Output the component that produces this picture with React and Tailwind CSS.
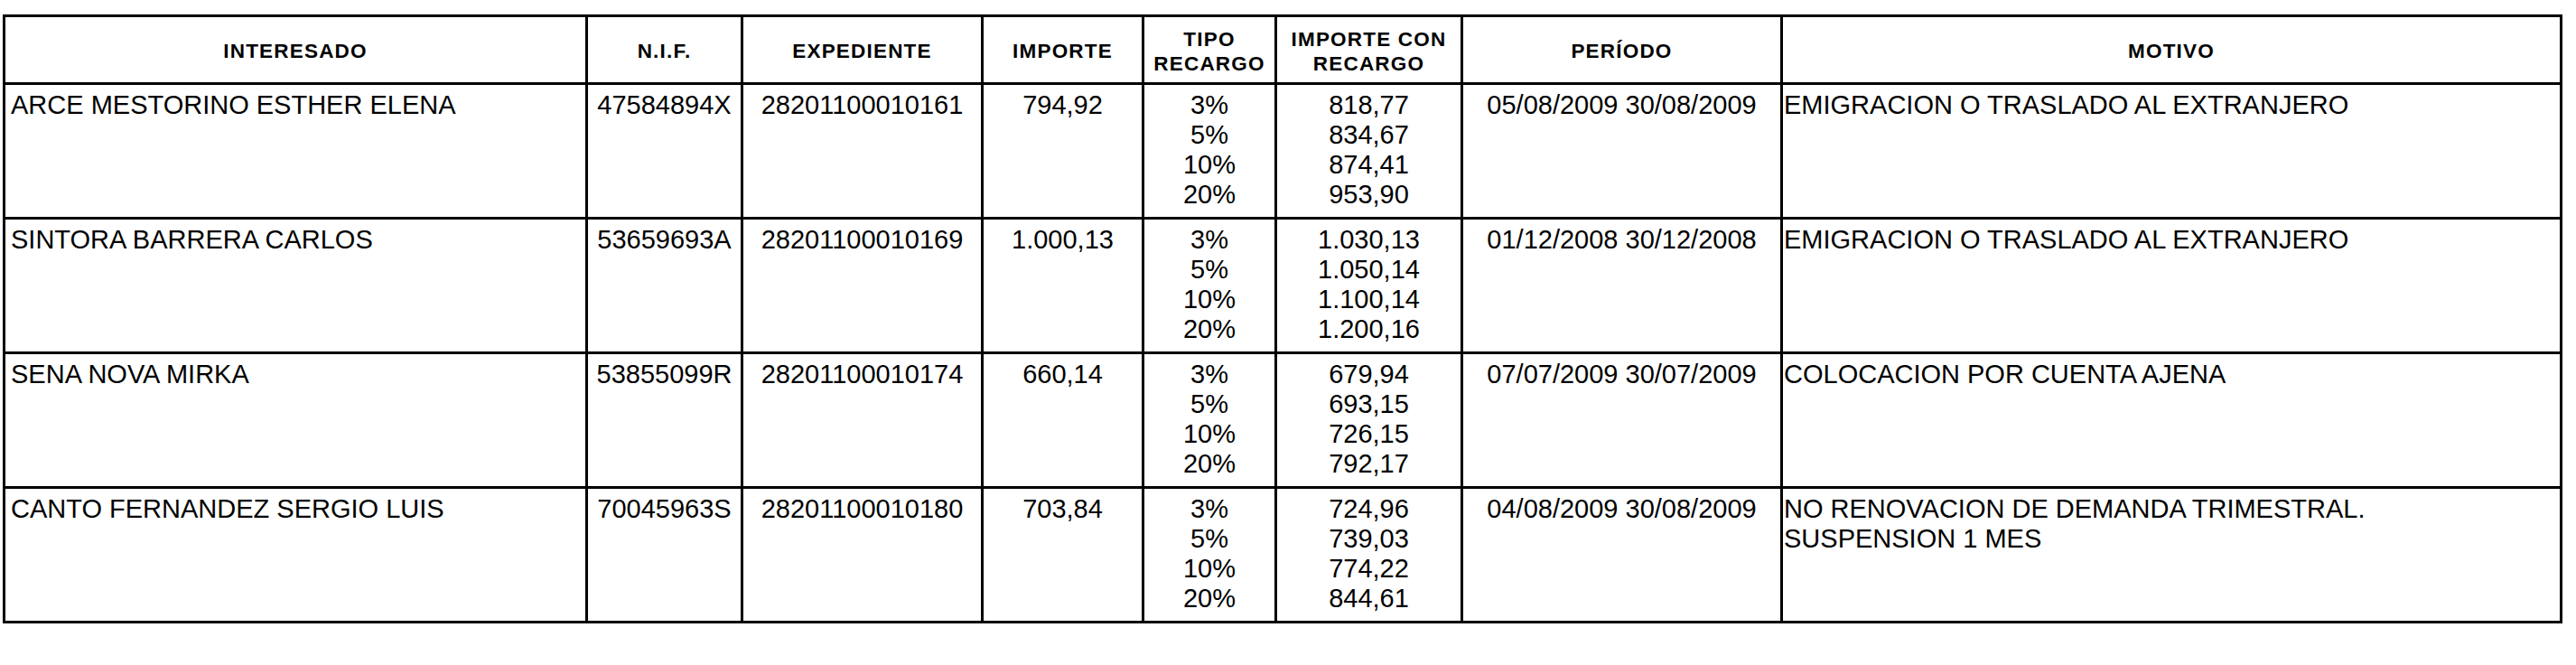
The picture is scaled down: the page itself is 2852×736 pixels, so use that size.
const headers = [
  ["INTERESADO"],
  ["N.I.F."],
  ["EXPEDIENTE"],
  ["IMPORTE"],
  ["TIPO", "RECARGO"],
  ["IMPORTE CON", "RECARGO"],
  ["PERÍODO"],
  ["MOTIVO"],
];

const tipos = ["3%", "5%", "10%", "20%"];

const rows = [
  {
    nombre: "ARCE MESTORINO ESTHER ELENA",
    nif: "47584894X",
    expediente: "28201100010161",
    importe: "794,92",
    recargos: ["818,77", "834,67", "874,41", "953,90"],
    periodo: "05/08/2009 30/08/2009",
    motivo: ["EMIGRACION O TRASLADO AL EXTRANJERO"],
  },
  {
    nombre: "SINTORA BARRERA CARLOS",
    nif: "53659693A",
    expediente: "28201100010169",
    importe: "1.000,13",
    recargos: ["1.030,13", "1.050,14", "1.100,14", "1.200,16"],
    periodo: "01/12/2008 30/12/2008",
    motivo: ["EMIGRACION O TRASLADO AL EXTRANJERO"],
  },
  {
    nombre: "SENA NOVA MIRKA",
    nif: "53855099R",
    expediente: "28201100010174",
    importe: "660,14",
    recargos: ["679,94", "693,15", "726,15", "792,17"],
    periodo: "07/07/2009 30/07/2009",
    motivo: ["COLOCACION POR CUENTA AJENA"],
  },
  {
    nombre: "CANTO FERNANDEZ SERGIO LUIS",
    nif: "70045963S",
    expediente: "28201100010180",
    importe: "703,84",
    recargos: ["724,96", "739,03", "774,22", "844,61"],
    periodo: "04/08/2009 30/08/2009",
    motivo: ["NO RENOVACION DE DEMANDA TRIMESTRAL.", "SUSPENSION 1 MES"],
  },
];

const cell = "bg-white pt-[6px] text-[29px] leading-[33px] whitespace-nowrap";

const Lines = ({ items }) => (
  <>
    {items.map((line) => (
      <div key={line}>{line}</div>
    ))}
  </>
);

const App = () => {
  return (
    <div className="min-h-screen bg-white text-black font-['Liberation_Sans',Arial,sans-serif] pt-[16px] pl-[3px]">
      <div className="grid w-[2834px] bg-black p-[3px] gap-[3px] grid-cols-[642px_169px_263px_175px_144px_203px_351px_860px] grid-rows-[72px_146px_146px_146px_146px]">
        {headers.map((h) => (
          <div
            key={h.join(" ")}
            className="bg-white flex flex-col items-center justify-center text-center font-bold text-[22.5px] tracking-[1.2px] leading-[27px] pt-[3px]"
          >
            <Lines items={h} />
          </div>
        ))}

        {rows.map((r) => (
          <div key={r.expediente} className="contents">
            <div className={`${cell} pl-[6px]`}>{r.nombre}</div>
            <div className={`${cell} text-center`}>{r.nif}</div>
            <div className={`${cell} text-center`}>{r.expediente}</div>
            <div className={`${cell} text-center`}>{r.importe}</div>
            <div className={`${cell} text-center`}>
              <Lines items={tipos} />
            </div>
            <div className={`${cell} text-center`}>
              <Lines items={r.recargos} />
            </div>
            <div className={`${cell} text-center`}>{r.periodo}</div>
            <div className={`${cell} pl-px`}>
              <Lines items={r.motivo} />
            </div>
          </div>
        ))}
      </div>
    </div>
  );
};

export default App;
